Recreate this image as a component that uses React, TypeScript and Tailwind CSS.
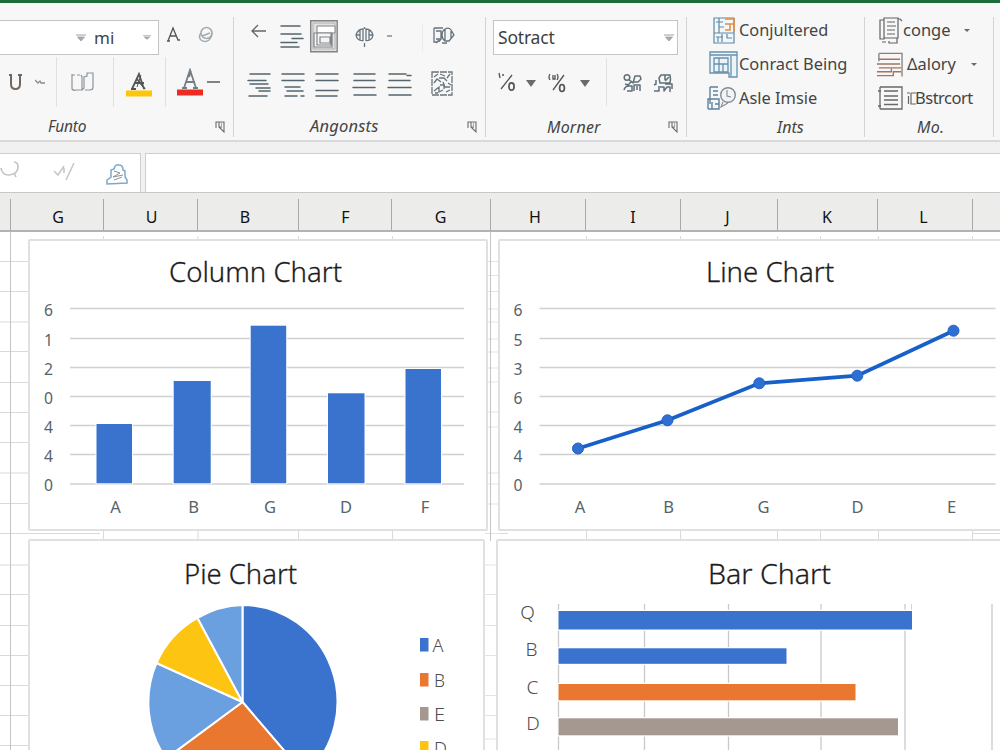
import type { ReactNode } from "react";

const BLUE = "#3a73cd";
const ORANGE = "#ea7730";
const TAUPE = "#a59891";
const YELLOW = "#fdc511";
const SKY = "#6a9fe0";

const COLUMNS = [
  { label: "G", className: "w-[93px] pl-[2px]" },
  { label: "U", className: "w-[94px] pl-[2px]" },
  { label: "B", className: "w-[101px] pr-[6px]" },
  { label: "F", className: "w-[93px] pl-px" },
  { label: "G", className: "w-[99px] pr-px" },
  { label: "H", className: "w-[95px] pr-[6px]" },
  { label: "I", className: "w-[95px]" },
  { label: "J", className: "w-[97px] pr-[3px]" },
  { label: "K", className: "w-[100px] pr-px" },
  { label: "L", className: "w-[95px] pr-[3px]" },
];

/* ---------- ribbon ---------- */

function Group({ className, label, launcher, children }: {
  className: string;
  label: ReactNode;
  launcher?: boolean;
  children: ReactNode;
}) {
  return (
    <div className={`flex shrink-0 flex-col border-r border-[#d3d3d3] ${className}`}>
      {children}
      <div className="mt-auto flex h-[21px] items-center">
        {label}
        {launcher && (
          <svg className="ml-auto mr-[7px] h-[14px] w-[11px]" viewBox="0 0 11 14" fill="none" stroke="#6d6d6d" strokeWidth="1.1">
            <path d="M1 8V2h8v10L4 7M4 2v5h2.500" />
            <path d="M6.500 3v5" stroke="#aaa" />
          </svg>
        )}
      </div>
    </div>
  );
}

function Caret({ className, color = "#6a6a6a" }: { className: string; color?: string }) {
  return (
    <svg className={`shrink-0 ${className}`} viewBox="0 0 10 7" preserveAspectRatio="none">
      <path d="M0 0h10L5 7z" fill={color} />
    </svg>
  );
}

function FieldCaret({ className }: { className: string }) {
  return (
    <svg className={`shrink-0 ${className}`} viewBox="0 0 10 8" preserveAspectRatio="none" fill="none" stroke="#a0a0a0">
      <path d="M0 1h10" />
      <path d="M1.500 3h7L5 7z" fill="#aaa" strokeWidth="0.800" />
    </svg>
  );
}

function Lines({ paths, className = "" }: { paths: string; className?: string }) {
  return (
    <svg className={`h-[26px] w-[25px] shrink-0 ${className}`} viewBox="0 0 25 26" fill="none" stroke="#56666e" strokeWidth="1.500" strokeLinecap="round">
      <path d={paths} />
    </svg>
  );
}

function FontGroup() {
  return (
    <Group
      className="w-[234px]"
      launcher
      label={<span className="pl-[48px] text-[15.500px] italic tracking-[-0.2px] text-[#444]">Funto</span>}
    >
      <div className="mt-[3px] flex h-[35px] items-center">
        <div className="flex h-full w-[159px] items-center border border-l-0 border-[#c4c4c4] bg-white">
          <FieldCaret className="ml-[76px] h-[8px] w-[10px]" />
          <span className="ml-2 w-[24px] text-[17px] leading-none text-[#444]">mi</span>
          <FieldCaret className="ml-auto mr-[7px] h-[5px] w-[8px]" />
        </div>
        <svg className="-mt-[6px] ml-2 h-[17px] w-[13px]" viewBox="0 0 13 17" fill="none" stroke="#555" strokeWidth="1.300">
          <path d="M1 15L6 2l5 12h2M3 10h6M0 15h3" />
        </svg>
        <svg className="-mt-[6px] ml-[18px] h-[17px] w-[16px]" viewBox="0 0 16 17" fill="none" stroke="#a3abb0" strokeWidth="1.500">
          <ellipse cx="8.500" cy="7" rx="5.500" ry="5.500" />
          <path d="M3 7q-3 4 0 7 4 3 8 0 3-3 3-7M4 10l8-3" />
        </svg>
      </div>
      <div className="flex h-[54px] items-center">
        <svg className="ml-[9px] h-[17px] w-[13px]" viewBox="0 0 13 17" fill="none" stroke="#73675d" strokeWidth="2">
          <path d="M2 1v9q0 5 4.500 5t4.500-5V1M0 1h3M9 1h4" />
        </svg>
        <svg className="ml-[13px] h-[8px] w-[10px]" viewBox="0 0 10 8" fill="none" stroke="#8c8c8c">
          <path d="M0 2l3 3 2-2 1 2h4" strokeWidth="1.300" />
        </svg>
        <div className="ml-[11px] h-[50px] w-px bg-[#e0e0e0]" />
        <svg className="ml-[14px] h-[20px] w-[24px]" viewBox="0 0 24 20" fill="none" stroke="#8b959b" strokeWidth="1.200">
          <path d="M1 2v15q2 2 4 1h6V5l-1-2M11 18l2-2V5l3-1V1h6v14q0 3-3 3h-5" />
          <path d="M1 3h9" strokeDasharray="3 2" />
        </svg>
        <div className="ml-[18px] h-[50px] w-px bg-[#e0e0e0]" />
        <svg className="mt-[5px] ml-[12px] h-[25px] w-[26px]" viewBox="0 0 26 25" fill="none" stroke="#555" strokeWidth="1.800">
          <path d="M5 17h5M6 17L13 2l5 15M9 11h9M11 7l8 10" />
          <path d="M15 3l-4 12" strokeWidth="1" />
          <path d="M0 18.500h26v6H0z" fill="#fcc60b" stroke="none" />
        </svg>
        <div className="ml-[13px] h-[50px] w-px bg-[#e0e0e0]" />
        <svg className="ml-[11px] h-[28px] w-[26px]" viewBox="0 0 26 28" fill="none" stroke="#737e86" strokeWidth="1.800">
          <path d="M7 20l6-18 6 18M9 14h9M5 20h5M16 20h5M14 3l-2 6" />
          <path d="M0 21.500h26v6H0z" fill="#ed2b22" stroke="none" />
        </svg>
        <div className="ml-[4px] h-[2px] w-[13px] bg-[#7e8487]" />
      </div>
    </Group>
  );
}

function AlignGroup() {
  return (
    <Group
      className="w-[252px]"
      launcher
      label={<span className="pl-[76px] text-[16.500px] italic tracking-[0.2px] text-[#444]">Angonsts</span>}
    >
      <div className="mt-[3px] flex h-[35px] items-center">
        <svg className="-mt-[14px] ml-[17px] h-[14px] w-[15px]" viewBox="0 0 15 14" fill="none" stroke="#666" strokeWidth="1.300">
          <path d="M15 7H1M7 1L1 7l6 6" />
        </svg>
        <Lines className="-mt-[4px] ml-[14px]" paths="M1 3h19M1 11h20M12 15.500h11M1 19.500h16M1 24h18" />
        <svg className="-mt-[3px] ml-[5px] h-[33px] w-[28px]" viewBox="0 0 28 33" fill="none" stroke="#818487">
          <path d="M.700.700h26.500v31H.700z" fill="#e2e2e2" strokeWidth="1.400" />
          <path d="M3 3h22v26H3z" stroke="#b0b0b0" />
          <path d="M7 6h18v7H7z" fill="#fff" />
          <path d="M4 13h18v14H4zM7 13h14v12H7zM10 17h10v6H10z" fill="#f5f5f5" strokeWidth="1.200" />
        </svg>
        <svg className="-mt-[2px] ml-[17px] h-[22px] w-[19px]" viewBox="0 0 19 22" fill="none" stroke="#69757c" strokeWidth="1.300">
          <path d="M8 3Q3 3 1 9q1 6 7 5.500zM11 3q5 0 7 6-1 6-7 5.500zM5 4v10M14 4v10M1 9h4M14 9h4M9.500 1v2M9.500 17v4" />
        </svg>
        <div className="-mt-[4px] ml-[13px] h-[2px] w-[5px] bg-[#a6a6a6]" />
        <div className="ml-[30px] h-[28px] w-px bg-[#ececec]" />
        <svg className="-mt-[3px] ml-[10px] h-[20px] w-[22px]" viewBox="0 0 22 20" fill="none" stroke="#66737a" strokeWidth="1.300">
          <path d="M1 2h9M1 2v14h4M3 5h5v8H3M12 3q4-2 6 1l3 5-5 6h-4q-3-2-3-6t3-6M12 3v11M18 5v8M3 17l3-3M9 17h5M8 13l-2 3" />
        </svg>
      </div>
      <div className="flex h-[54px] items-center pt-[3px]">
        <Lines className="ml-[13px]" paths="M3 3h20M1 9.500h18M3 13h18M9 17h14M12 20h11M2 25h18" />
        <Lines className="ml-[9px]" paths="M1 3h22M1 9.500h22M4 16h15M6 20h16M4 25h12M20 25h3" />
        <Lines className="ml-[9px]" paths="M1 3h22M1 9.500h22M1 19.500h22M1 25h21" />
        <Lines className="ml-[12px]" paths="M2 3h21M2 9.500h21M1 16.500h22M2 24h22" />
        <Lines className="ml-[10px]" paths="M2 3h17M20 4.500h4M2 9.500h21M1 16.500h23M2 24h22" />
        <svg className="ml-[19px] h-[25px] w-[22px]" viewBox="0 0 22 25" fill="none" stroke="#69757c" strokeWidth="1.300">
          <path d="M1 1h20v23H1z" strokeDasharray="7 1" />
          <path d="M3 6l4-3M9 3l5 2M16 7l3-4M3 12l3-4 4 3M8 7h5l3 3M3 20l5-4v5l4-2M12 11l2 5h5M15 21l4-2M9 14h4v4M4 22h3M17 12l3 2" />
        </svg>
      </div>
    </Group>
  );
}

function NumberGroup() {
  return (
    <Group
      className="w-[201px]"
      launcher
      label={<span className="pl-[61px] text-[16px] italic tracking-[0.2px] text-[#444]">Morner</span>}
    >
      <div className="mt-[3px] ml-[7px] flex h-[35px] w-[185px] shrink-0 items-center border border-[#c4c4c4] bg-white pl-1">
        <span className="mt-px text-[17.500px] leading-none tracking-[-0.2px] text-[#3f3f3f]">Sotract</span>
        <FieldCaret className="ml-auto mr-[3px] h-[8px] w-[10px]" />
      </div>
      <div className="flex h-[54px] items-center">
        <svg className="ml-[12px] h-[20px] w-[18px]" viewBox="0 0 18 20" fill="none" stroke="#555" strokeWidth="1.300">
          <path d="M1 1l1 5M4 3h2M14 3L3 17" />
          <ellipse cx="13.500" cy="14.500" rx="2.600" ry="3.600" strokeWidth="1.700" />
        </svg>
        <Caret className="ml-[10px] mt-[3px] h-[7px] w-[10px]" />
        <svg className="ml-[12px] mt-[2px] h-[20px] w-[18px]" viewBox="0 0 18 20" fill="none" stroke="#555" strokeWidth="1.300">
          <path d="M2 1Q0 4 2 7M5 2v4h2V2M9 1q2 3 0 6M16 2L5 17" />
          <ellipse cx="14" cy="15" rx="2.400" ry="3.500" strokeWidth="1.700" />
        </svg>
        <Caret className="ml-[14px] mt-[3px] h-[7px] w-[10px]" />
        <div className="ml-[16px] h-[48px] w-px bg-[#e0e0e0]" />
        <svg className="ml-[16px] mt-px h-[20px] w-[19px]" viewBox="0 0 19 20" fill="none" stroke="#607079" strokeWidth="1.500" strokeLinejoin="round">
          <circle cx="4" cy="4.500" r="2.800" />
          <path d="M6 7l4 3 2-7h5l1 3-3 3h-4M9 8l-4 4-3-1M1 17q1-4 5-4h3v5H4M11 18v-6h6v6M14 13v4" />
        </svg>
        <svg className="ml-[11px] mt-px h-[20px] w-[20px]" viewBox="0 0 20 20" fill="none" stroke="#607079" strokeWidth="1.500" strokeLinejoin="round">
          <path d="M8 2h9q1 4 0 8H7L6 5zM12 2v5M16 4l-4 4M3 7v4l-2 1M1 18h5v-5M7 14h4v4l3-4h3v5M12 11h7v5" />
        </svg>
      </div>
    </Group>
  );
}

const itemRow = "flex h-[34px] shrink-0 items-center leading-none text-[#444]";

function StyleGroup() {
  return (
    <Group
      className="w-[178px]"
      label={<span className="pl-[90px] text-[16px] italic text-[#444]">Ints</span>}
    >
      <div className={`${itemRow} -mt-[4px] text-[16.300px]`}>
        <svg className="ml-[26px] mr-[4px] h-[27px] w-[22px] shrink-0" viewBox="0 0 22 27" fill="none" stroke="#5e87a4" strokeWidth="1.200">
          <path d="M1 1h20v25H1z" fill="#f1f7fa" />
          <path d="M1 16h20M6 1v15M3 5h7M6 10h5M5 20v5M9 17v8M14 17v4h5M3 20h7" />
          <path d="M12 13h5V7h-5M17 7h4M12 2h9v13" stroke="#e88d39" strokeWidth="1.500" />
        </svg>
        Conjultered
      </div>
      <div className={`${itemRow} text-[16.400px]`}>
        <svg className="mt-px ml-[22px] mr-[1px] h-[28px] w-[29px] shrink-0" viewBox="0 0 29 28" fill="none" stroke="#6590ae" strokeWidth="1.300">
          <path d="M1 1h27v25H20v-4H1z" fill="#edf4f8" />
          <path d="M1 4h27M5 7h14v14H5zM5 13h14M10 7v14M22 5v20M14 13v8" />
        </svg>
        <span className="whitespace-nowrap">Conract Being</span>
      </div>
      <div className={`${itemRow} text-[16.400px]`}>
        <svg className="ml-[20px] mr-[2px] h-[26px] w-[30px] shrink-0" viewBox="0 0 30 26" fill="none" stroke="#5b83a0" strokeWidth="1.400">
          <path d="M3 2h8M3 2v17M1 24V14h11v10H1M6 6h5M6 10h5M5 17v7M8 19h4" />
          <circle cx="21" cy="10" r="7.300" fill="#f3f4f6" stroke="#858a96" />
          <path d="M20 5v6l4 1M16 17l-2 5 7-4" stroke="#858a96" strokeWidth="1.100" />
        </svg>
        Asle Imsie
      </div>
    </Group>
  );
}

function EditGroup() {
  return (
    <Group
      className="w-[129px]"
      label={<span className="pl-[52px] text-[16px] italic tracking-[0.3px] text-[#444]">Mo.</span>}
    >
      <div className={`${itemRow} -mt-[4px] text-[16.500px]`}>
        <svg className="ml-[14px] h-[27px] w-[24px] shrink-0" viewBox="0 0 24 27" fill="none" stroke="#626262" strokeWidth="1.200">
          <path d="M1 3h4v19H1zM5 1h14v20H5zM8 5h8M8 9h9M8 13h8M8 17h8M3 25h4M10 24v2h8v-5M19 2h2l2 2" />
        </svg>
        <span>conge</span>
        <Caret className="ml-auto mr-[23px] h-[3px] w-[6px]" />
      </div>
      <div className={`${itemRow} text-[16.400px]`}>
        <svg className="mt-px ml-[11px] mr-[4px] h-[26px] w-[27px] shrink-0" viewBox="0 0 28 26" fill="none" stroke="#a17561" strokeWidth="1.400">
          <path d="M3 1h24v24M3 1v8" stroke="#8b8079" />
          <path d="M3 7h22M1 12h24M3 16h23M1 20h15v-3M1 24h17v-4h8" />
        </svg>
        &Delta;alory
        <Caret className="ml-auto mr-[16px] h-[3px] w-[6px]" />
      </div>
      <div className={`${itemRow} text-[16.500px]`}>
        <svg className="ml-[13px] mr-[4px] h-[25px] w-[25px] shrink-0" viewBox="0 0 25 25" fill="none" stroke="#686868" strokeWidth="1.300">
          <path d="M2 1h22v22H2M2 1v22M6 5h14M6 10h14M6 14h14M6 18.500h14M0 5h3M0 20h3" />
        </svg>
        <svg className="mr-px h-[13px] w-[9px] shrink-0" viewBox="0 0 9 13" fill="none" stroke="#666">
          <path d="M0 1h3M1.500 4v8M4 1h5M4 1v11h5" strokeWidth="1.200" />
        </svg>
        <span className="-ml-[2px] tracking-[-0.5px]">Bstrcort</span>
      </div>
    </Group>
  );
}

function FormulaBar() {
  return (
    <div className="flex h-[40px] shrink-0 gap-[4px] border-b border-[#c8c8c8]">
      <div className="flex w-[141px] items-center border-t border-r border-[#cfcfcf] bg-white">
        <svg className="-mt-[8px] h-[20px] w-[20px]" viewBox="0 0 20 20" fill="none" stroke="#c2c2c2" strokeWidth="1.600">
          <path d="M1 9q1 7 8 7 9-1 9-8 0-5-4-5M14 14l2 4" />
        </svg>
        <svg className="-mt-[3px] ml-[33px] h-[21px] w-[23px]" viewBox="0 0 23 21" fill="none" stroke="#c8c8c8" strokeWidth="1.600">
          <path d="M1 10l4 4 6-9M11 12V7M21 2l-8 17" />
        </svg>
        <svg className="ml-[30px] mt-[1px] h-[22px] w-[22px]" viewBox="0 0 22 22" fill="none" stroke="#7da7cd" strokeWidth="1.500">
          <path d="M5 11V7l3-1q1-5 5-4 4 0 4 5l2 1v6l2 3v3L1 21v-4l4-3z" />
          <path d="M8 8l6 2-7 4 10-2M8 17l8-3" stroke="#8b9297" strokeWidth="1" />
        </svg>
      </div>
      <div className="flex-1 border-t border-l border-[#cfcfcf] bg-white" />
    </div>
  );
}

/* ---------- charts ---------- */

function Card({ className, children }: { className: string; children: ReactNode }) {
  return (
    <div className={`relative shrink-0 overflow-hidden rounded-[2px] border-2 border-[#e0e0e0] bg-white ${className}`}>
      {children}
    </div>
  );
}

function Title({ x, y, width, children }: { x: number; y: number; width: number; children: string }) {
  return (
    <text
      x={x}
      y={y}
      textLength={width}
      lengthAdjust="spacingAndGlyphs"
      fontSize="28"
      fontWeight="300"
      fill="#1c1c1c"
      stroke="#1c1c1c"
      strokeWidth="0.300"
    >
      {children}
    </text>
  );
}

const GRID_Y = [308.5, 338.5, 367.5, 396.5, 425.5, 454.5, 484];

function Axis({ x, labels }: { x: number; labels: string[] }) {
  return (
    <g fontSize="17" fill="#56636a">
      {labels.map((label, i) => (
        <text key={i} x={x - 4.500} y={GRID_Y[i] + 7} textLength="9" lengthAdjust="spacingAndGlyphs">
          {label}
        </text>
      ))}
    </g>
  );
}

function ColumnChart() {
  const bars = [
    { label: "A", x: 96.5, w: 35.5, top: 424, lx: 115.5 },
    { label: "B", x: 173.7, w: 37, top: 381, lx: 193.5 },
    { label: "G", x: 250.7, w: 35.5, top: 325.7, lx: 270 },
    { label: "D", x: 328, w: 36.5, top: 393.3, lx: 346 },
    { label: "F", x: 405.5, w: 35.5, top: 369, lx: 425 },
  ];
  return (
    <svg className="h-[288px] w-[455px]" viewBox="30 241 455 288">
      <Title x={169} y={282} width={173}>Column Chart</Title>
      <Axis x={48.5} labels={["6", "1", "2", "0", "4", "4", "0"]} />
      {GRID_Y.map((y) => (
        <path key={y} d={`M70 ${y}H464`} stroke="#d0d0d0" strokeWidth="1.500" />
      ))}
      {bars.map((b) => (
        <g key={b.label}>
          <rect x={b.x} y={b.top} width={b.w} height={483.300 - b.top} fill={BLUE} stroke="#fff" strokeWidth="2" paintOrder="stroke" />
          <text x={b.lx} y="513" fontSize="16.500" fill="#56636a" textAnchor="middle">{b.label}</text>
        </g>
      ))}
    </svg>
  );
}

function LineChart() {
  const points = [
    { label: "A", x: 578, y: 448.5, lx: 580 },
    { label: "B", x: 667.5, y: 420.3, lx: 668.5 },
    { label: "G", x: 759.3, y: 383.3, lx: 763.5 },
    { label: "D", x: 857.3, y: 375.7, lx: 857.5 },
    { label: "E", x: 953.5, y: 330.7, lx: 951.5 },
  ];
  return (
    <svg className="h-[288px] w-[500px]" viewBox="500 241 500 288">
      <Title x={706} y={282} width={128}>Line Chart</Title>
      <Axis x={518} labels={["6", "5", "3", "6", "4", "4", "0"]} />
      {GRID_Y.map((y) => (
        <path key={y} d={`M539.500 ${y}H995.500`} stroke="#d0d0d0" strokeWidth="1.500" />
      ))}
      <polyline points={points.map((p) => `${p.x},${p.y}`).join(" ")} fill="none" stroke="#175fc9" strokeWidth="3.800" />
      {points.map((p) => (
        <g key={p.label}>
          <circle cx={p.x} cy={p.y} r="5.500" fill="#2f6fd2" stroke="#1c61c8" />
          <text x={p.lx} y="513" fontSize="16.500" fill="#56636a" textAnchor="middle">{p.label}</text>
        </g>
      ))}
    </svg>
  );
}

function PieChart() {
  const arc = "A95 97 0 0 1";
  const slices = [
    { d: `M242.500 702V605${arc} 305 775z`, fill: BLUE },
    { d: `M242.500 702L305 775${arc} 166 758.500z`, fill: ORANGE },
    { d: `M242.500 702L166 758.500${arc} 156.500 663z`, fill: SKY },
    { d: `M242.500 702L156.500 663${arc} 197.500 618z`, fill: YELLOW },
    { d: `M242.500 702L197.500 618${arc} 242.500 605z`, fill: SKY },
  ];
  const legend = [
    { label: "A", color: BLUE, y: 638 },
    { label: "B", color: ORANGE, y: 673 },
    { label: "E", color: TAUPE, y: 707 },
    { label: "D", color: YELLOW, y: 741 },
  ];
  return (
    <svg className="h-[288px] w-[453px]" viewBox="30 541 453 288">
      <Title x={184} y={584} width={113}>Pie Chart</Title>
      {slices.map((s, i) => (
        <path key={i} d={s.d} fill={s.fill} stroke="#fff" strokeWidth="2" strokeLinejoin="round" />
      ))}
      {legend.map((l) => (
        <g key={l.label}>
          <rect x="420" y={l.y} width="8.500" height="13.500" fill={l.color} />
          <text x={l.label === "A" ? 432.500 : 434} y={l.y + 14} fontSize="19" fontWeight="300" fill="#4d4d4d" textLength={l.label === "D" ? 13 : 11} lengthAdjust="spacingAndGlyphs">
            {l.label}
          </text>
        </g>
      ))}
    </svg>
  );
}

function BarChart() {
  const bars = [
    { label: "Q", y: 611, h: 18.5, end: 912, color: BLUE, lx: 527.5, ly: 619 },
    { label: "B", y: 648.3, h: 15.5, end: 786.5, color: BLUE, lx: 531.5, ly: 656 },
    { label: "C", y: 684, h: 16.3, end: 855.5, color: ORANGE, lx: 532.5, ly: 693.5 },
    { label: "D", y: 718.3, h: 17, end: 898, color: TAUPE, lx: 533, ly: 730 },
  ];
  return (
    <svg className="h-[288px] w-[502px]" viewBox="498 541 502 288">
      <Title x={708} y={584} width={123}>Bar Chart</Title>
      {[558.5, 644.5, 728.5, 821, 905, 992].map((x) => (
        <path key={x} d={`M${x} 604V830`} stroke="#c9c9c9" strokeWidth="1.300" />
      ))}
      <path d="M911.500 604v7" stroke="#d5d5d5" />
      {bars.map((b) => (
        <g key={b.label}>
          <rect x="558.500" y={b.y} width={b.end - 558.5} height={b.h} fill={b.color} stroke="#fff" strokeWidth="2.500" paintOrder="stroke" />
          <text x={b.lx} y={b.ly} fontSize="19" fontWeight="300" fill="#4d4d4d" textAnchor="middle">{b.label}</text>
        </g>
      ))}
    </svg>
  );
}

// Cell lines that show between and around the chart cards
function CellLines() {
  const rows = [261.5, 291.5, 322, 351.5, 382.5, 412.5, 442.5, 473, 503.5, 533.5, 565, 594.5, 625.5, 655.5, 685.5, 715.5, 745.5];
  const gutterRows = [261.5, 275.5, 291.5, 309, 322, 339, 352, 368, 382, 412, 427, 473, 484, 504, 533.5, 565, 594.5, 625.5, 655.5, 695.5, 715.5, 739];
  return (
    <svg className="absolute inset-0 h-[518px] w-[1000px]" viewBox="0 232 1000 518" fill="none" stroke="#d9d9d9">
      {rows.map((y) => <path key={y} d={`M0 ${y}H100`} />)}
      {gutterRows.map((y) => <path key={y} d={`M485 ${y}H500`} stroke="#e3e3e3" />)}
      {[103.5, 198, 298.5, 392.5, 586.5, 680.5, 777.5, 820.5, 878.5, 972.5].map((x) => (
        <path key={x} d={`M${x} 236v4M${x} 530v10`} />
      ))}
      <path d="M500 533.500h8M972 533.500h28" />
      <path d="M10.500 232v518M490.500 232v309" stroke="#c4c4c4" />
    </svg>
  );
}

export default function App() {
  return (
    <div className="flex h-[750px] w-[1000px] flex-col overflow-hidden bg-[#f1f1f1] font-['Noto_Sans',sans-serif]">
      <div className="h-[3px] shrink-0 bg-[#1c6d3b]" />
      <div className="flex h-[139px] shrink-0 border-b-2 border-[#d9d9d9] bg-[#f7f7f7] pt-[14px] pb-[3px]">
        <FontGroup />
        <AlignGroup />
        <NumberGroup />
        <StyleGroup />
        <EditGroup />
      </div>
      <div className="h-[11px] shrink-0" />
      <FormulaBar />

      <div className="flex h-[39px] shrink-0 border-b-2 border-[#b2b2b2] bg-[#ececeb] pt-[6px]">
        <div className="w-[11px] shrink-0 border-r border-[#a8a8a8]" />
        {COLUMNS.map((c, i) => (
          <div
            key={i}
            className={`flex shrink-0 items-center justify-center border-r border-[#a8a8a8] pt-[4px] text-[16px] leading-none text-[#111] ${c.className}`}
          >
            {c.label}
          </div>
        ))}
      </div>

      <div className="relative h-[518px] shrink-0 overflow-hidden bg-white">
        <CellLines />
        <div className="flex gap-[10px] pt-[7px] pl-[28px]">
          <Card className="h-[292px] w-[460px]"><ColumnChart /></Card>
          <Card className="h-[292px] w-[504px]"><LineChart /></Card>
        </div>
        <div className="mt-[8px] flex gap-[11px] pl-[28px]">
          <Card className="h-[292px] w-[457px]"><PieChart /></Card>
          <Card className="h-[292px] w-[506px]"><BarChart /></Card>
        </div>
      </div>
    </div>
  );
}
